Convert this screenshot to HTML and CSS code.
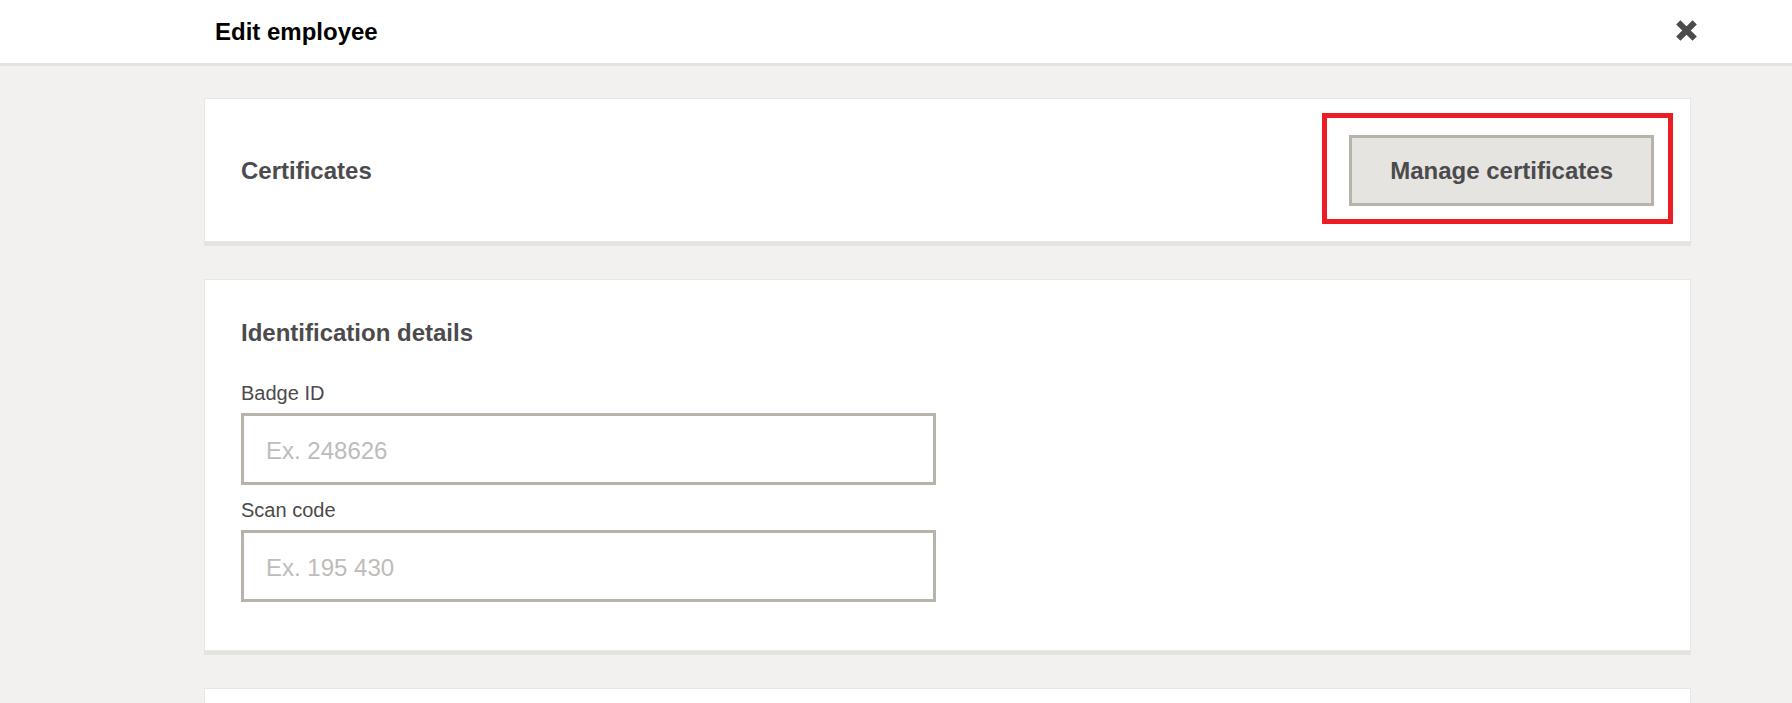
FILE: index.html
```html
<!DOCTYPE html>
<html lang="en">
<head>
<meta charset="utf-8">
<title>Edit employee</title>
<link rel="stylesheet" href="styles.css">
</head>
<body>
<header class="topbar">
  <div class="topbar-inner">
    <h1 class="topbar-title">Edit employee</h1>
    <button class="close-btn" type="button" aria-label="Close">
      <svg width="21" height="21" viewBox="0 0 21 21" aria-hidden="true">
        <path d="M2.3 2.3 L18.7 18.7 M18.7 2.3 L2.3 18.7" stroke="#4b4a4d" stroke-width="6" fill="none"/>
      </svg>
    </button>
  </div>
</header>

<main class="main">
  <section class="card card-row">
    <h2 class="card-title">Certificates</h2>
    <div class="highlight-wrap">
      <button class="btn-secondary" type="button">Manage certificates</button>
      <span class="highlight-box" aria-hidden="true"></span>
    </div>
  </section>

  <section class="card card-form">
    <h2 class="card-title section-heading">Identification details</h2>
    <div class="form-grid">
      <div class="field">
        <label class="field-label" for="badge">Badge ID</label>
        <input class="field-input" id="badge" type="text" placeholder="Ex. 248626">
      </div>
      <div></div>
      <div class="field">
        <label class="field-label" for="scan">Scan code</label>
        <input class="field-input" id="scan" type="text" placeholder="Ex. 195 430">
      </div>
    </div>
  </section>

  <section class="card card-empty"></section>
</main>
</body>
</html>
```

FILE: styles.css
```css
* {
  box-sizing: border-box;
}

html, body {
  margin: 0;
  padding: 0;
}

body {
  background: #f2f1ef;
  font-family: "Liberation Sans", Arial, Helvetica, sans-serif;
  color: #4b4a4d;
  overflow: hidden;
}

.topbar {
  background: #ffffff;
  border-bottom: 3px solid #e4e3e0;
}

.topbar-inner {
  margin-left: 215px;
  width: 1482px;
  height: 63px;
  display: flex;
  align-items: center;
  justify-content: space-between;
}

.topbar-title {
  margin: 0;
  font-size: 24px;
  line-height: 28px;
  font-weight: 700;
  color: #000000;
}

.close-btn {
  display: flex;
  padding: 0;
  margin: 0 0 2px 0;
  border: 0;
  background: transparent;
  cursor: pointer;
}

.main {
  margin-left: 204px;
  width: 1487px;
  padding-top: 32px;
}

.card {
  background: #ffffff;
  border: 1px solid #e8e7e4;
  box-shadow: 0 4px 0 #e4e3e0;
  margin-bottom: 37px;
  padding: 36px 36px 35px 36px;
}

.card-row {
  display: flex;
  align-items: center;
  justify-content: space-between;
}

.card-title {
  margin: 0;
  font-size: 24px;
  line-height: 28px;
  font-weight: 700;
  color: #4b4a4d;
}

.highlight-wrap {
  position: relative;
  display: flex;
}

.btn-secondary {
  height: 71px;
  padding: 0 38px;
  background: #e6e4e0;
  border: 3px solid #b8b3aa;
  border-radius: 0;
  font-family: "Liberation Sans", Arial, Helvetica, sans-serif;
  font-size: 24px;
  font-weight: 700;
  color: #4b4a4d;
  cursor: pointer;
}

.highlight-box {
  position: absolute;
  left: -27px;
  right: -19px;
  top: -22px;
  bottom: -18px;
  border: 5px solid #ec1c24;
  pointer-events: none;
}

.section-heading {
  line-height: 34px;
  margin-bottom: 31px;
}

.form-grid {
  display: grid;
  grid-template-columns: 1fr 1fr;
  column-gap: 24px;
}

.field {
  display: flex;
  flex-direction: column;
  margin-bottom: 13px;
}

.field-label {
  font-size: 20px;
  line-height: 24px;
  color: #4b4a4d;
  margin-bottom: 8px;
}

.field-input {
  height: 72px;
  width: 100%;
  border: 3px solid #b8b3aa;
  border-radius: 0;
  padding: 4px 22px 0 22px;
  font-family: "Liberation Sans", Arial, Helvetica, sans-serif;
  font-size: 24px;
  color: #4b4a4d;
  background: #ffffff;
  outline: none;
}

.field-input::placeholder {
  color: #bdbcbb;
  opacity: 1;
}

.card-empty {
  min-height: 200px;
}
```
